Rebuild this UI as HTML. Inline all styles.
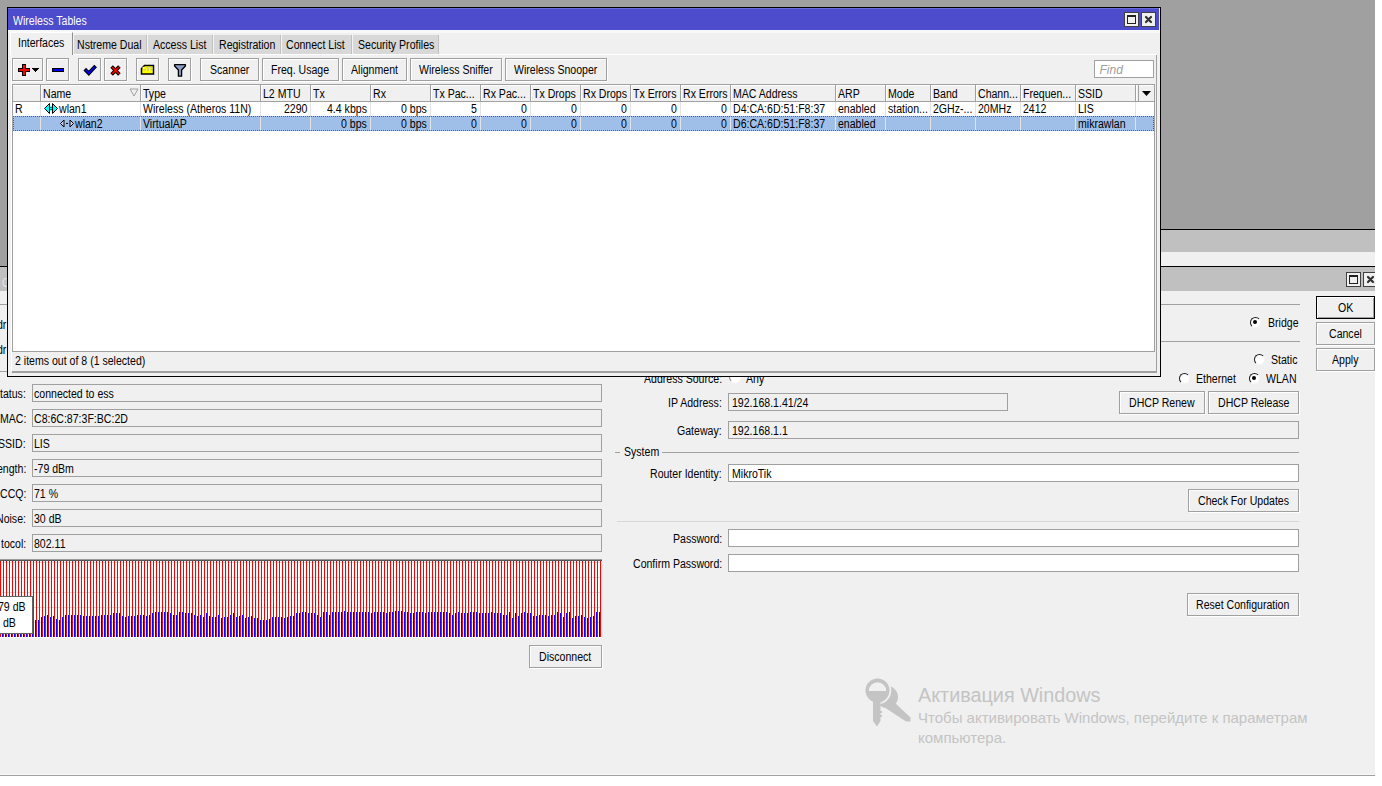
<!DOCTYPE html>
<html><head><meta charset="utf-8">
<style>
*{box-sizing:border-box;margin:0;padding:0}
html,body{width:1382px;height:786px;overflow:hidden;background:#fff;font-family:"Liberation Sans",sans-serif;font-size:12px;color:#000}
.a{position:absolute}
.t{position:absolute;white-space:nowrap;line-height:14px;transform-origin:0 0}
</style></head><body>
<div class="a" style="left:0;top:0;width:1375px;height:776px;overflow:hidden">
<div class="a" style="left:0px;top:0px;width:1375px;height:266px;background:#a0a0a0"></div>
<div class="a" style="left:1000px;top:229px;width:375px;height:1px;background:#000"></div>
<div class="a" style="left:1000px;top:230px;width:375px;height:22px;background:#c0c0c0"></div>
<div class="a" style="left:1000px;top:252px;width:375px;height:14px;background:#f0f0f0"></div>
<div class="a" style="left:0px;top:266px;width:1375px;height:1px;background:#000"></div>
<div class="a" style="left:0px;top:267px;width:1375px;height:24px;background:#c0c0c0"></div>
<div class="t" style="left:2.00px;top:276.00px;transform:scaleX(0.88);color:#e4e4e4;">C</div>
<div class="a" style="left:0px;top:291px;width:1375px;height:483px;background:#f0f0f0"></div>
<div class="a" style="left:0px;top:774px;width:1375px;height:1px;background:#f8f8f8"></div>
<div class="a" style="left:0px;top:775px;width:1375px;height:1px;background:#a0a0a0"></div>
<div class="a" style="left:1346px;top:272px;width:15px;height:15px;border:1px solid #404040;background:#f0f0f0"></div>
<div class="a" style="left:1349px;top:275px;width:9px;height:9px;border:1px solid #202020;border-top-width:2px"></div>
<div class="a" style="left:1363px;top:272px;width:15px;height:15px;border:1px solid #404040;background:#f0f0f0"></div>
<svg class="a" style="left:1363px;top:272px" width="15" height="15"><path d="M5 5L10 10M10 5L5 10" stroke="#303030" stroke-width="2.2" stroke-linecap="round"/></svg>
<div class="a" style="left:0px;top:304px;width:1300px;height:1px;background:#a0a0a0"></div>
<div class="a" style="left:1160px;top:341px;width:140px;height:1px;background:#a0a0a0"></div>
<div class="a" style="left:0px;top:371px;width:8px;height:1px;background:#a0a0a0"></div>
<div class="t" style="left:-3.00px;top:318.00px;transform:scaleX(0.88);">dr</div>
<div class="t" style="left:-3.00px;top:343.00px;transform:scaleX(0.88);">dr</div>
<div class="a" style="left:1316px;top:296px;width:59px;height:23px;border:1px solid #000;box-shadow:inset 1px 1px 0 #fff,inset -1px -1px 0 #a0a0a0;background:#f0f0f0"></div>
<div class="t" style="left:1337.88px;top:301.00px;transform:scaleX(0.88);">OK</div>
<div class="a" style="left:1316px;top:322px;width:59px;height:23px;border:1px solid #a0a0a0;box-shadow:inset 1px 1px 0 #fff,1px 1px 0 #fff;background:#f0f0f0"></div>
<div class="t" style="left:1329.06px;top:327.00px;transform:scaleX(0.88);">Cancel</div>
<div class="a" style="left:1316px;top:348px;width:59px;height:23px;border:1px solid #a0a0a0;box-shadow:inset 1px 1px 0 #fff,1px 1px 0 #fff;background:#f0f0f0"></div>
<div class="t" style="left:1332.29px;top:353.00px;transform:scaleX(0.88);">Apply</div>
<div class="a" style="left:1249.5px;top:316.5px;width:11px;height:11px;border-radius:50%;background:#fff;border:1.4px solid;border-color:#1a1a1a #f4f4f4 #f4f4f4 #1a1a1a"></div>
<div class="a" style="left:1253px;top:320px;width:4px;height:4px;border-radius:50%;background:#000"></div>
<div class="t" style="left:1268.00px;top:316.00px;transform:scaleX(0.88);">Bridge</div>
<div class="a" style="left:1253.5px;top:353.5px;width:11px;height:11px;border-radius:50%;background:#fff;border:1.4px solid;border-color:#1a1a1a #f4f4f4 #f4f4f4 #1a1a1a"></div>
<div class="t" style="left:1271.00px;top:353.00px;transform:scaleX(0.88);">Static</div>
<div class="a" style="left:1178.5px;top:372.5px;width:11px;height:11px;border-radius:50%;background:#fff;border:1.4px solid;border-color:#1a1a1a #f4f4f4 #f4f4f4 #1a1a1a"></div>
<div class="t" style="left:1196.00px;top:372.00px;transform:scaleX(0.88);">Ethernet</div>
<div class="a" style="left:1248.5px;top:372.5px;width:11px;height:11px;border-radius:50%;background:#fff;border:1.4px solid;border-color:#1a1a1a #f4f4f4 #f4f4f4 #1a1a1a"></div>
<div class="a" style="left:1252px;top:376px;width:4px;height:4px;border-radius:50%;background:#000"></div>
<div class="t" style="left:1266.00px;top:372.00px;transform:scaleX(0.88);">WLAN</div>
<div class="a" style="left:32px;top:384px;width:570px;height:18px;border:1px solid #a0a0a0;background:#f0f0f0"></div>
<div class="t" style="left:0.19px;top:387.00px;transform:scaleX(0.88);">tatus:</div>
<div class="t" style="left:34.00px;top:387.00px;transform:scaleX(0.88);">connected to ess</div>
<div class="a" style="left:32px;top:409px;width:570px;height:18px;border:1px solid #a0a0a0;background:#f0f0f0"></div>
<div class="t" style="left:-0.40px;top:412.00px;transform:scaleX(0.88);">MAC:</div>
<div class="t" style="left:34.00px;top:412.00px;transform:scaleX(0.88);">C8:6C:87:3F:BC:2D</div>
<div class="a" style="left:32px;top:434px;width:570px;height:18px;border:1px solid #a0a0a0;background:#f0f0f0"></div>
<div class="t" style="left:-1.57px;top:437.00px;transform:scaleX(0.88);">SSID:</div>
<div class="t" style="left:34.00px;top:437.00px;transform:scaleX(0.88);">LIS</div>
<div class="a" style="left:32px;top:459px;width:570px;height:18px;border:1px solid #a0a0a0;background:#f0f0f0"></div>
<div class="t" style="left:-3.34px;top:462.00px;transform:scaleX(0.88);">ength:</div>
<div class="t" style="left:34.00px;top:462.00px;transform:scaleX(0.88);">-79 dBm</div>
<div class="a" style="left:32px;top:484px;width:570px;height:18px;border:1px solid #a0a0a0;background:#f0f0f0"></div>
<div class="t" style="left:-0.40px;top:487.00px;transform:scaleX(0.88);">CCQ:</div>
<div class="t" style="left:34.00px;top:487.00px;transform:scaleX(0.88);">71 %</div>
<div class="a" style="left:32px;top:509px;width:570px;height:18px;border:1px solid #a0a0a0;background:#f0f0f0"></div>
<div class="t" style="left:-3.93px;top:512.00px;transform:scaleX(0.88);">Noise:</div>
<div class="t" style="left:34.00px;top:512.00px;transform:scaleX(0.88);">30 dB</div>
<div class="a" style="left:32px;top:534px;width:570px;height:18px;border:1px solid #a0a0a0;background:#f0f0f0"></div>
<div class="t" style="left:0.77px;top:537.00px;transform:scaleX(0.88);">tocol:</div>
<div class="t" style="left:34.00px;top:537.00px;transform:scaleX(0.88);">802.11</div>
<div class="a" style="left:0px;top:559px;width:602px;height:1px;background:#9a9a9a"></div>
<div class="a" style="left:0px;top:560px;width:602px;height:1px;background:#555"></div>
<div class="a" style="left:0px;top:561px;width:602px;height:76px;background:#fff"></div>
<div class="a" style="left:0px;top:637px;width:602px;height:1px;background:#fff"></div>
<div class="a" style="left:0px;top:562px;width:602px;height:1px;background:#d4d8d8"></div>
<div class="a" style="left:0px;top:577px;width:602px;height:1px;background:#d4d8d8"></div>
<div class="a" style="left:0px;top:592px;width:602px;height:1px;background:#d4d8d8"></div>
<div class="a" style="left:0px;top:607px;width:602px;height:1px;background:#d4d8d8"></div>
<div class="a" style="left:0px;top:622px;width:602px;height:1px;background:#d4d8d8"></div>
<div class="a" style="left:1px;top:561px;width:1px;height:76px;background:#dceeee"></div>
<div class="a" style="left:16px;top:561px;width:1px;height:76px;background:#dceeee"></div>
<div class="a" style="left:31px;top:561px;width:1px;height:76px;background:#dceeee"></div>
<div class="a" style="left:46px;top:561px;width:1px;height:76px;background:#dceeee"></div>
<div class="a" style="left:61px;top:561px;width:1px;height:76px;background:#dceeee"></div>
<div class="a" style="left:76px;top:561px;width:1px;height:76px;background:#dceeee"></div>
<div class="a" style="left:91px;top:561px;width:1px;height:76px;background:#dceeee"></div>
<div class="a" style="left:106px;top:561px;width:1px;height:76px;background:#dceeee"></div>
<div class="a" style="left:121px;top:561px;width:1px;height:76px;background:#dceeee"></div>
<div class="a" style="left:136px;top:561px;width:1px;height:76px;background:#dceeee"></div>
<div class="a" style="left:151px;top:561px;width:1px;height:76px;background:#dceeee"></div>
<div class="a" style="left:166px;top:561px;width:1px;height:76px;background:#dceeee"></div>
<div class="a" style="left:181px;top:561px;width:1px;height:76px;background:#dceeee"></div>
<div class="a" style="left:196px;top:561px;width:1px;height:76px;background:#dceeee"></div>
<div class="a" style="left:211px;top:561px;width:1px;height:76px;background:#dceeee"></div>
<div class="a" style="left:226px;top:561px;width:1px;height:76px;background:#dceeee"></div>
<div class="a" style="left:241px;top:561px;width:1px;height:76px;background:#dceeee"></div>
<div class="a" style="left:256px;top:561px;width:1px;height:76px;background:#dceeee"></div>
<div class="a" style="left:271px;top:561px;width:1px;height:76px;background:#dceeee"></div>
<div class="a" style="left:286px;top:561px;width:1px;height:76px;background:#dceeee"></div>
<div class="a" style="left:301px;top:561px;width:1px;height:76px;background:#dceeee"></div>
<div class="a" style="left:316px;top:561px;width:1px;height:76px;background:#dceeee"></div>
<div class="a" style="left:331px;top:561px;width:1px;height:76px;background:#dceeee"></div>
<div class="a" style="left:346px;top:561px;width:1px;height:76px;background:#dceeee"></div>
<div class="a" style="left:361px;top:561px;width:1px;height:76px;background:#dceeee"></div>
<div class="a" style="left:376px;top:561px;width:1px;height:76px;background:#dceeee"></div>
<div class="a" style="left:391px;top:561px;width:1px;height:76px;background:#dceeee"></div>
<div class="a" style="left:406px;top:561px;width:1px;height:76px;background:#dceeee"></div>
<div class="a" style="left:421px;top:561px;width:1px;height:76px;background:#dceeee"></div>
<div class="a" style="left:436px;top:561px;width:1px;height:76px;background:#dceeee"></div>
<div class="a" style="left:451px;top:561px;width:1px;height:76px;background:#dceeee"></div>
<div class="a" style="left:466px;top:561px;width:1px;height:76px;background:#dceeee"></div>
<div class="a" style="left:481px;top:561px;width:1px;height:76px;background:#dceeee"></div>
<div class="a" style="left:496px;top:561px;width:1px;height:76px;background:#dceeee"></div>
<div class="a" style="left:511px;top:561px;width:1px;height:76px;background:#dceeee"></div>
<div class="a" style="left:526px;top:561px;width:1px;height:76px;background:#dceeee"></div>
<div class="a" style="left:541px;top:561px;width:1px;height:76px;background:#dceeee"></div>
<div class="a" style="left:556px;top:561px;width:1px;height:76px;background:#dceeee"></div>
<div class="a" style="left:571px;top:561px;width:1px;height:76px;background:#dceeee"></div>
<div class="a" style="left:586px;top:561px;width:1px;height:76px;background:#dceeee"></div>
<div class="a" style="left:601px;top:561px;width:1px;height:76px;background:#dceeee"></div>
<svg class="a" style="left:0;top:561px" width="602" height="76" shape-rendering="crispEdges"><path fill="#ff0000" d="M0 0h1v76h-1zM3 0h1v76h-1zM6 0h1v76h-1zM9 0h1v76h-1zM12 0h1v76h-1zM15 0h1v76h-1zM18 0h1v76h-1zM21 0h1v76h-1zM24 0h1v76h-1zM27 0h1v76h-1zM30 0h1v76h-1zM33 0h1v76h-1zM36 0h1v76h-1zM39 0h1v76h-1zM42 0h1v76h-1zM45 0h1v76h-1zM48 0h1v76h-1zM51 0h1v76h-1zM54 0h1v76h-1zM57 0h1v76h-1zM60 0h1v76h-1zM63 0h1v76h-1zM66 0h1v76h-1zM69 0h1v76h-1zM72 0h1v76h-1zM75 0h1v76h-1zM78 0h1v76h-1zM81 0h1v76h-1zM84 0h1v76h-1zM87 0h1v76h-1zM90 0h1v76h-1zM93 0h1v76h-1zM96 0h1v76h-1zM99 0h1v76h-1zM102 0h1v76h-1zM105 0h1v76h-1zM108 0h1v76h-1zM111 0h1v76h-1zM114 0h1v76h-1zM117 0h1v76h-1zM120 0h1v76h-1zM123 0h1v76h-1zM126 0h1v76h-1zM129 0h1v76h-1zM132 0h1v76h-1zM135 0h1v76h-1zM138 0h1v76h-1zM141 0h1v76h-1zM144 0h1v76h-1zM147 0h1v76h-1zM150 0h1v76h-1zM153 0h1v76h-1zM156 0h1v76h-1zM159 0h1v76h-1zM162 0h1v76h-1zM165 0h1v76h-1zM168 0h1v76h-1zM171 0h1v76h-1zM174 0h1v76h-1zM177 0h1v76h-1zM180 0h1v76h-1zM183 0h1v76h-1zM186 0h1v76h-1zM189 0h1v76h-1zM192 0h1v76h-1zM195 0h1v76h-1zM198 0h1v76h-1zM201 0h1v76h-1zM204 0h1v76h-1zM207 0h1v76h-1zM210 0h1v76h-1zM213 0h1v76h-1zM216 0h1v76h-1zM219 0h1v76h-1zM222 0h1v76h-1zM225 0h1v76h-1zM228 0h1v76h-1zM231 0h1v76h-1zM234 0h1v76h-1zM237 0h1v76h-1zM240 0h1v76h-1zM243 0h1v76h-1zM246 0h1v76h-1zM249 0h1v76h-1zM252 0h1v76h-1zM255 0h1v76h-1zM258 0h1v76h-1zM261 0h1v76h-1zM264 0h1v76h-1zM267 0h1v76h-1zM270 0h1v76h-1zM273 0h1v76h-1zM276 0h1v76h-1zM279 0h1v76h-1zM282 0h1v76h-1zM285 0h1v76h-1zM288 0h1v76h-1zM291 0h1v76h-1zM294 0h1v76h-1zM297 0h1v76h-1zM300 0h1v76h-1zM303 0h1v76h-1zM306 0h1v76h-1zM309 0h1v76h-1zM312 0h1v76h-1zM315 0h1v76h-1zM318 0h1v76h-1zM321 0h1v76h-1zM324 0h1v76h-1zM327 0h1v76h-1zM330 0h1v76h-1zM333 0h1v76h-1zM336 0h1v76h-1zM339 0h1v76h-1zM342 0h1v76h-1zM345 0h1v76h-1zM348 0h1v76h-1zM351 0h1v76h-1zM354 0h1v76h-1zM357 0h1v76h-1zM360 0h1v76h-1zM363 0h1v76h-1zM366 0h1v76h-1zM369 0h1v76h-1zM372 0h1v76h-1zM375 0h1v76h-1zM378 0h1v76h-1zM381 0h1v76h-1zM384 0h1v76h-1zM387 0h1v76h-1zM390 0h1v76h-1zM393 0h1v76h-1zM396 0h1v76h-1zM399 0h1v76h-1zM402 0h1v76h-1zM405 0h1v76h-1zM408 0h1v76h-1zM411 0h1v76h-1zM414 0h1v76h-1zM417 0h1v76h-1zM420 0h1v76h-1zM423 0h1v76h-1zM426 0h1v76h-1zM429 0h1v76h-1zM432 0h1v76h-1zM435 0h1v76h-1zM438 0h1v76h-1zM441 0h1v76h-1zM444 0h1v76h-1zM447 0h1v76h-1zM450 0h1v76h-1zM453 0h1v76h-1zM456 0h1v76h-1zM459 0h1v76h-1zM462 0h1v76h-1zM465 0h1v76h-1zM468 0h1v76h-1zM471 0h1v76h-1zM474 0h1v76h-1zM477 0h1v76h-1zM480 0h1v76h-1zM483 0h1v76h-1zM486 0h1v76h-1zM489 0h1v76h-1zM492 0h1v76h-1zM495 0h1v76h-1zM498 0h1v76h-1zM501 0h1v76h-1zM504 0h1v76h-1zM507 0h1v76h-1zM510 0h1v76h-1zM513 0h1v76h-1zM516 0h1v76h-1zM519 0h1v76h-1zM522 0h1v76h-1zM525 0h1v76h-1zM528 0h1v76h-1zM531 0h1v76h-1zM534 0h1v76h-1zM537 0h1v76h-1zM540 0h1v76h-1zM543 0h1v76h-1zM546 0h1v76h-1zM549 0h1v76h-1zM552 0h1v76h-1zM555 0h1v76h-1zM558 0h1v76h-1zM561 0h1v76h-1zM564 0h1v76h-1zM567 0h1v76h-1zM570 0h1v76h-1zM573 0h1v76h-1zM576 0h1v76h-1zM579 0h1v76h-1zM582 0h1v76h-1zM585 0h1v76h-1zM588 0h1v76h-1zM591 0h1v76h-1zM594 0h1v76h-1zM597 0h1v76h-1zM600 0h1v76h-1z"/><path fill="#0000ff" d="M35 59h1v17h-1zM38 59h1v17h-1zM41 56h1v20h-1zM44 55h1v21h-1zM47 54h1v22h-1zM50 56h1v20h-1zM53 55h1v21h-1zM56 58h1v18h-1zM59 59h1v17h-1zM62 56h1v20h-1zM65 54h1v22h-1zM68 54h1v22h-1zM71 54h1v22h-1zM74 54h1v22h-1zM77 54h1v22h-1zM80 54h1v22h-1zM83 55h1v21h-1zM86 55h1v21h-1zM89 55h1v21h-1zM92 55h1v21h-1zM95 55h1v21h-1zM98 55h1v21h-1zM101 54h1v22h-1zM104 54h1v22h-1zM107 54h1v22h-1zM110 54h1v22h-1zM113 52h1v24h-1zM116 52h1v24h-1zM119 52h1v24h-1zM122 55h1v21h-1zM125 56h1v20h-1zM128 55h1v21h-1zM131 55h1v21h-1zM134 55h1v21h-1zM137 54h1v22h-1zM140 54h1v22h-1zM143 54h1v22h-1zM146 55h1v21h-1zM149 54h1v22h-1zM152 52h1v24h-1zM155 51h1v25h-1zM158 51h1v25h-1zM161 51h1v25h-1zM164 51h1v25h-1zM167 51h1v25h-1zM170 52h1v24h-1zM173 54h1v22h-1zM176 54h1v22h-1zM179 51h1v25h-1zM182 51h1v25h-1zM185 52h1v24h-1zM188 52h1v24h-1zM191 52h1v24h-1zM194 54h1v22h-1zM197 55h1v21h-1zM200 54h1v22h-1zM203 56h1v20h-1zM206 52h1v24h-1zM209 55h1v21h-1zM212 56h1v20h-1zM215 56h1v20h-1zM218 54h1v22h-1zM221 57h1v19h-1zM224 56h1v20h-1zM227 56h1v20h-1zM230 54h1v22h-1zM233 52h1v24h-1zM236 56h1v20h-1zM239 55h1v21h-1zM242 54h1v22h-1zM245 57h1v19h-1zM248 56h1v20h-1zM251 55h1v21h-1zM254 57h1v19h-1zM257 57h1v19h-1zM260 59h1v17h-1zM263 59h1v17h-1zM266 59h1v17h-1zM269 58h1v18h-1zM272 56h1v20h-1zM275 56h1v20h-1zM278 56h1v20h-1zM281 56h1v20h-1zM284 57h1v19h-1zM287 56h1v20h-1zM290 55h1v21h-1zM293 55h1v21h-1zM296 52h1v24h-1zM299 52h1v24h-1zM302 51h1v25h-1zM305 51h1v25h-1zM308 52h1v24h-1zM311 52h1v24h-1zM314 52h1v24h-1zM317 54h1v22h-1zM320 56h1v20h-1zM323 51h1v25h-1zM326 51h1v25h-1zM329 54h1v22h-1zM332 51h1v25h-1zM335 51h1v25h-1zM338 51h1v25h-1zM341 51h1v25h-1zM344 50h1v26h-1zM347 51h1v25h-1zM350 51h1v25h-1zM353 51h1v25h-1zM356 51h1v25h-1zM359 51h1v25h-1zM362 51h1v25h-1zM365 51h1v25h-1zM368 51h1v25h-1zM371 52h1v24h-1zM374 51h1v25h-1zM377 51h1v25h-1zM380 51h1v25h-1zM383 51h1v25h-1zM386 52h1v24h-1zM389 51h1v25h-1zM392 51h1v25h-1zM395 50h1v26h-1zM398 50h1v26h-1zM401 50h1v26h-1zM404 51h1v25h-1zM407 51h1v25h-1zM410 52h1v24h-1zM413 52h1v24h-1zM416 51h1v25h-1zM419 51h1v25h-1zM422 51h1v25h-1zM425 52h1v24h-1zM428 51h1v25h-1zM431 51h1v25h-1zM434 51h1v25h-1zM437 51h1v25h-1zM440 51h1v25h-1zM443 51h1v25h-1zM446 51h1v25h-1zM449 52h1v24h-1zM452 54h1v22h-1zM455 52h1v24h-1zM458 51h1v25h-1zM461 52h1v24h-1zM464 52h1v24h-1zM467 52h1v24h-1zM470 51h1v25h-1zM473 51h1v25h-1zM476 51h1v25h-1zM479 52h1v24h-1zM482 52h1v24h-1zM485 52h1v24h-1zM488 52h1v24h-1zM491 51h1v25h-1zM494 52h1v24h-1zM497 52h1v24h-1zM500 52h1v24h-1zM503 54h1v22h-1zM506 54h1v22h-1zM509 51h1v25h-1zM512 57h1v19h-1zM515 52h1v24h-1zM518 55h1v21h-1zM521 52h1v24h-1zM524 51h1v25h-1zM527 52h1v24h-1zM530 52h1v24h-1zM533 55h1v21h-1zM536 55h1v21h-1zM539 54h1v22h-1zM542 54h1v22h-1zM545 54h1v22h-1zM548 55h1v21h-1zM551 54h1v22h-1zM554 54h1v22h-1zM557 51h1v25h-1zM560 52h1v24h-1zM563 56h1v20h-1zM566 52h1v24h-1zM569 51h1v25h-1zM572 57h1v19h-1zM575 55h1v21h-1zM578 55h1v21h-1zM581 54h1v22h-1zM584 56h1v20h-1zM587 57h1v19h-1zM590 56h1v20h-1zM593 55h1v21h-1zM596 51h1v25h-1zM599 51h1v25h-1zM2 60h1v16h-1zM5 60h1v16h-1zM8 60h1v16h-1zM11 60h1v16h-1zM14 60h1v16h-1zM17 60h1v16h-1zM20 60h1v16h-1zM23 60h1v16h-1zM26 60h1v16h-1zM29 60h1v16h-1zM32 60h1v16h-1z"/></svg>
<div class="a" style="left:-2px;top:596px;width:35px;height:38px;border:1px solid #646464;background:#fff"></div>
<div class="t" style="left:-1.80px;top:600.00px;transform:scaleX(0.88);">79 dB</div>
<div class="t" style="left:2.50px;top:616.00px;transform:scaleX(0.88);">dB</div>
<div class="a" style="left:529px;top:645px;width:73px;height:23px;border:1px solid #a0a0a0;box-shadow:inset 1px 1px 0 #fff,1px 1px 0 #fff;background:#f0f0f0"></div>
<div class="t" style="left:539.38px;top:650.00px;transform:scaleX(0.88);">Disconnect</div>
<div class="t" style="left:643.96px;top:372.00px;transform:scaleX(0.88);">Address Source:</div>
<div class="t" style="left:745.50px;top:372.00px;transform:scaleX(0.88);">Any</div>
<div class="a" style="left:729px;top:371px;width:12px;height:12px;border-radius:50%;background:#fff;border:1px solid;border-color:#808080 #fff #fff #808080"></div>
<div class="a" style="left:728px;top:393px;width:280px;height:18px;border:1px solid #a0a0a0;background:#f0f0f0"></div>
<div class="t" style="left:668.21px;top:396.00px;transform:scaleX(0.88);">IP Address:</div>
<div class="t" style="left:732.00px;top:396.00px;transform:scaleX(0.88);">192.168.1.41/24</div>
<div class="a" style="left:1119px;top:391px;width:86px;height:23px;border:1px solid #a0a0a0;box-shadow:inset 1px 1px 0 #fff,1px 1px 0 #fff;background:#f0f0f0"></div>
<div class="t" style="left:1129.23px;top:396.00px;transform:scaleX(0.88);">DHCP Renew</div>
<div class="a" style="left:1208px;top:391px;width:91px;height:23px;border:1px solid #a0a0a0;box-shadow:inset 1px 1px 0 #fff,1px 1px 0 #fff;background:#f0f0f0"></div>
<div class="t" style="left:1217.79px;top:396.00px;transform:scaleX(0.88);">DHCP Release</div>
<div class="a" style="left:728px;top:421px;width:571px;height:18px;border:1px solid #a0a0a0;background:#f0f0f0"></div>
<div class="t" style="left:677.41px;top:424.00px;transform:scaleX(0.88);">Gateway:</div>
<div class="t" style="left:732.00px;top:424.00px;transform:scaleX(0.88);">192.168.1.1</div>
<div class="a" style="left:615px;top:452px;width:5px;height:1px;background:#a0a0a0"></div>
<div class="t" style="left:624.00px;top:445.00px;transform:scaleX(0.88);">System</div>
<div class="a" style="left:662px;top:452px;width:637px;height:1px;background:#a0a0a0"></div>
<div class="a" style="left:728px;top:464px;width:571px;height:18px;border:1px solid #a0a0a0;background:#fff"></div>
<div class="t" style="left:650.42px;top:467.00px;transform:scaleX(0.88);">Router Identity:</div>
<div class="t" style="left:732.00px;top:467.00px;transform:scaleX(0.88);">MikroTik</div>
<div class="a" style="left:1188px;top:489px;width:111px;height:23px;border:1px solid #a0a0a0;box-shadow:inset 1px 1px 0 #fff,1px 1px 0 #fff;background:#f0f0f0"></div>
<div class="t" style="left:1198.02px;top:494.00px;transform:scaleX(0.88);">Check For Updates</div>
<div class="a" style="left:617px;top:521px;width:682px;height:1px;background:#d8d8d8"></div>
<div class="a" style="left:728px;top:529px;width:571px;height:18px;border:1px solid #a0a0a0;background:#fff"></div>
<div class="t" style="left:672.71px;top:532.00px;transform:scaleX(0.88);">Password:</div>
<div class="a" style="left:728px;top:554px;width:571px;height:18px;border:1px solid #a0a0a0;background:#fff"></div>
<div class="t" style="left:632.80px;top:557.00px;transform:scaleX(0.88);">Confirm Password:</div>
<div class="a" style="left:1187px;top:593px;width:112px;height:23px;border:1px solid #a0a0a0;box-shadow:inset 1px 1px 0 #fff,1px 1px 0 #fff;background:#f0f0f0"></div>
<div class="t" style="left:1196.34px;top:598.00px;transform:scaleX(0.88);">Reset Configuration</div>
<div class="t" style="left:918.00px;top:687.67px;font-size:20px;transform:scaleX(0.99);color:#c4c4c4;">Активация Windows</div>
<div class="t" style="left:918.00px;top:711.25px;font-size:15px;color:#c4c4c4;">Чтобы активировать Windows, перейдите к параметрам</div>
<div class="t" style="left:918.00px;top:731.25px;font-size:15px;color:#c4c4c4;">компьютера.</div>
<svg class="a" style="left:860px;top:670px" width="60" height="62" viewBox="0 0 60 62">
<g fill="#c4c4c4">
<circle cx="27" cy="27" r="11"/>
<path d="M24 37 L34.5 32.5 L50.5 47.5 L50.5 51.5 L46 51.5 Z"/>
</g>
<circle cx="17.5" cy="20.5" r="13.8" fill="#f0f0f0"/>
<g fill="#c4c4c4">
<circle cx="17.5" cy="20.5" r="12"/>
<path d="M13 28 H20.5 V41 H22 V43 H20.5 V45 H22 V47 H20.5 V51 L17 56.5 L13 51 Z"/>
</g>
<path d="M8.8 21 A8.7 8.7 0 0 1 26.2 21 Z" fill="#f0f0f0"/>
</svg>
<div class="a" style="left:7px;top:7px;width:1154px;height:370px;background:#000"></div>
<div class="a" style="left:8px;top:8px;width:1152px;height:368px;background:#f0f0f0"></div>
<div class="a" style="left:8px;top:8px;width:1151px;height:22px;background:#4c4ccc"></div>
<div class="t" style="left:13.00px;top:14.00px;transform:scaleX(0.88);color:#fff;">Wireless Tables</div>
<div class="a" style="left:1124px;top:12px;width:15px;height:15px;border:1px solid #404040;background:#f0f0f0"></div>
<div class="a" style="left:1127px;top:15px;width:9px;height:9px;border:1px solid #202020;border-top-width:2px"></div>
<div class="a" style="left:1141px;top:12px;width:15px;height:15px;border:1px solid #404040;background:#f0f0f0"></div>
<svg class="a" style="left:1141px;top:12px" width="15" height="15"><path d="M5 5L10 10M10 5L5 10" stroke="#303030" stroke-width="2.2" stroke-linecap="round"/></svg>
<div class="a" style="left:8px;top:8px;width:1151px;height:1px;background:#6a6ad8"></div>
<div class="a" style="left:8px;top:30px;width:1152px;height:3px;background:#f8f8f8"></div>
<div class="a" style="left:11px;top:54px;width:1146px;height:319px;border:1px solid;border-color:#fff #a0a0a0 #a0a0a0 #fff"></div>
<div class="a" style="left:73px;top:35px;width:74px;height:19px;background:#d8d8d8;border-left:1px solid #f4f4f4;border-right:1px solid #c0c0c0"></div>
<div class="t" style="left:77.00px;top:38.00px;transform:scaleX(0.88);">Nstreme Dual</div>
<div class="a" style="left:147px;top:35px;width:66px;height:19px;background:#d8d8d8;border-left:1px solid #f4f4f4;border-right:1px solid #c0c0c0"></div>
<div class="t" style="left:152.50px;top:38.00px;transform:scaleX(0.88);">Access List</div>
<div class="a" style="left:213px;top:35px;width:68px;height:19px;background:#d8d8d8;border-left:1px solid #f4f4f4;border-right:1px solid #c0c0c0"></div>
<div class="t" style="left:218.70px;top:38.00px;transform:scaleX(0.88);">Registration</div>
<div class="a" style="left:281px;top:35px;width:71px;height:19px;background:#d8d8d8;border-left:1px solid #f4f4f4;border-right:1px solid #c0c0c0"></div>
<div class="t" style="left:285.60px;top:38.00px;transform:scaleX(0.88);">Connect List</div>
<div class="a" style="left:352px;top:35px;width:87px;height:19px;background:#d8d8d8;border-left:1px solid #f4f4f4;border-right:1px solid #c0c0c0"></div>
<div class="t" style="left:357.70px;top:38.00px;transform:scaleX(0.88);">Security Profiles</div>
<div class="a" style="left:73px;top:54px;width:1084px;height:1px;background:#fff"></div>
<div class="a" style="left:10px;top:32px;width:63px;height:23px;background:#f0f0f0;border-left:1px solid #fff;border-top:1px solid #fff;border-right:1px solid #909090"></div>
<div class="t" style="left:18.00px;top:36.00px;transform:scaleX(0.88);">Interfaces</div>
<div class="a" style="left:12px;top:58px;width:31px;height:23px;border:1px solid #a0a0a0;box-shadow:inset 1px 1px 0 #fff,1px 1px 0 #fff;background:#f0f0f0"></div>
<div class="a" style="left:46px;top:58px;width:23px;height:23px;border:1px solid #a0a0a0;box-shadow:inset 1px 1px 0 #fff,1px 1px 0 #fff;background:#f0f0f0"></div>
<div class="a" style="left:78px;top:58px;width:23px;height:23px;border:1px solid #a0a0a0;box-shadow:inset 1px 1px 0 #fff,1px 1px 0 #fff;background:#f0f0f0"></div>
<div class="a" style="left:104px;top:58px;width:23px;height:23px;border:1px solid #a0a0a0;box-shadow:inset 1px 1px 0 #fff,1px 1px 0 #fff;background:#f0f0f0"></div>
<div class="a" style="left:136px;top:58px;width:23px;height:23px;border:1px solid #a0a0a0;box-shadow:inset 1px 1px 0 #fff,1px 1px 0 #fff;background:#f0f0f0"></div>
<div class="a" style="left:168px;top:58px;width:23px;height:23px;border:1px solid #a0a0a0;box-shadow:inset 1px 1px 0 #fff,1px 1px 0 #fff;background:#f0f0f0"></div>
<div class="a" style="left:200px;top:58px;width:59px;height:23px;border:1px solid #a0a0a0;box-shadow:inset 1px 1px 0 #fff,1px 1px 0 #fff;background:#f0f0f0"></div>
<div class="t" style="left:209.84px;top:63.00px;transform:scaleX(0.88);">Scanner</div>
<div class="a" style="left:262px;top:58px;width:77px;height:23px;border:1px solid #a0a0a0;box-shadow:inset 1px 1px 0 #fff,1px 1px 0 #fff;background:#f0f0f0"></div>
<div class="t" style="left:271.45px;top:63.00px;transform:scaleX(0.88);">Freq. Usage</div>
<div class="a" style="left:342px;top:58px;width:65px;height:23px;border:1px solid #a0a0a0;box-shadow:inset 1px 1px 0 #fff,1px 1px 0 #fff;background:#f0f0f0"></div>
<div class="t" style="left:351.02px;top:63.00px;transform:scaleX(0.88);">Alignment</div>
<div class="a" style="left:410px;top:58px;width:92px;height:23px;border:1px solid #a0a0a0;box-shadow:inset 1px 1px 0 #fff,1px 1px 0 #fff;background:#f0f0f0"></div>
<div class="t" style="left:419.13px;top:63.00px;transform:scaleX(0.88);">Wireless Sniffer</div>
<div class="a" style="left:505px;top:58px;width:102px;height:23px;border:1px solid #a0a0a0;box-shadow:inset 1px 1px 0 #fff,1px 1px 0 #fff;background:#f0f0f0"></div>
<div class="t" style="left:514.33px;top:63.00px;transform:scaleX(0.88);">Wireless Snooper</div>
<svg class="a" style="left:12px;top:58px" width="190" height="23" shape-rendering="crispEdges">
<path d="M10 6h4v4h4v4h-4v4h-4v-4h-4v-4h4z" fill="#000"/><path d="M11 7h2v4h4v2h-4v4h-2v-4h-4v-2h4z" fill="#ff0000"/>
<path d="M20 10h7v1h-1v1h-1v1h-1v1h-1v-1h-1v-1h-1v-1h-1z" fill="#000"/>
<rect x="40" y="10" width="12" height="4" fill="#000"/><rect x="41" y="11" width="10" height="2" fill="#0000ff"/>
</svg>
<svg class="a" style="left:12px;top:58px" width="190" height="23">
<path d="M74.1 12.5 L76.8 15.2 L82.3 9.4" stroke="#000" stroke-width="3.8" fill="none" stroke-linecap="square" stroke-linejoin="miter"/>
<path d="M74.1 12.5 L76.8 15.2 L82.3 9.4" stroke="#0000ff" stroke-width="1.7" fill="none" stroke-linecap="square" stroke-linejoin="miter"/>
<path d="M99.6 8.6 L107.4 16.4 M107.4 8.6 L99.6 16.4" stroke="#000" stroke-width="3.6"/>
<path d="M100.2 9.2 L106.8 15.8 M106.8 9.2 L100.2 15.8" stroke="#ff0000" stroke-width="1.6"/>
<path d="M132.5 7.5 H141.5 V16 H129.5 V10.5 Z" fill="#ffff00" stroke="#000" stroke-width="1.5"/>
<path d="M134.5 9.8h2.5M138 9.8h2M131.5 11.8h2.5M135 11.8h2M138.5 11.8h2" stroke="#b0b0c8" stroke-width="1"/>
<circle cx="131.3" cy="9.6" r="0.9" fill="#fff"/>
<path d="M162.6 6.6 H173.4 V8 L169.6 12 V18.2 H166.4 V12 L162.6 8 Z" fill="#8c9cc8" stroke="#000" stroke-width="1.3" stroke-linejoin="round"/>
</svg>
<div class="a" style="left:1094px;top:60px;width:60px;height:18px;border:1px solid #a0a0a0;background:#fff"></div>
<div class="t" style="left:1099.50px;top:63.00px;color:#a0a0a0;font-style:italic">Find</div>
<div class="a" style="left:12px;top:84px;width:1143px;height:268px;border:1px solid #a0a0a0;background:#fff"></div>
<div class="a" style="left:13px;top:85px;width:1141px;height:16px;background:#f0f0f0;border-top:1px solid #fff"></div>
<div class="a" style="left:13px;top:101px;width:1141px;height:1px;background:#a0a0a0"></div>
<div class="a" style="left:40px;top:85px;width:1px;height:16px;background:#a0a0a0"></div>
<div class="a" style="left:41px;top:86px;width:1px;height:15px;background:#fff"></div>
<div class="a" style="left:40px;top:102px;width:1px;height:29px;background:#e4e4e4"></div>
<div class="a" style="left:140px;top:85px;width:1px;height:16px;background:#a0a0a0"></div>
<div class="a" style="left:141px;top:86px;width:1px;height:15px;background:#fff"></div>
<div class="a" style="left:140px;top:102px;width:1px;height:29px;background:#e4e4e4"></div>
<div class="a" style="left:260px;top:85px;width:1px;height:16px;background:#a0a0a0"></div>
<div class="a" style="left:261px;top:86px;width:1px;height:15px;background:#fff"></div>
<div class="a" style="left:260px;top:102px;width:1px;height:29px;background:#e4e4e4"></div>
<div class="a" style="left:310px;top:85px;width:1px;height:16px;background:#a0a0a0"></div>
<div class="a" style="left:311px;top:86px;width:1px;height:15px;background:#fff"></div>
<div class="a" style="left:310px;top:102px;width:1px;height:29px;background:#e4e4e4"></div>
<div class="a" style="left:370px;top:85px;width:1px;height:16px;background:#a0a0a0"></div>
<div class="a" style="left:371px;top:86px;width:1px;height:15px;background:#fff"></div>
<div class="a" style="left:370px;top:102px;width:1px;height:29px;background:#e4e4e4"></div>
<div class="a" style="left:430px;top:85px;width:1px;height:16px;background:#a0a0a0"></div>
<div class="a" style="left:431px;top:86px;width:1px;height:15px;background:#fff"></div>
<div class="a" style="left:430px;top:102px;width:1px;height:29px;background:#e4e4e4"></div>
<div class="a" style="left:480px;top:85px;width:1px;height:16px;background:#a0a0a0"></div>
<div class="a" style="left:481px;top:86px;width:1px;height:15px;background:#fff"></div>
<div class="a" style="left:480px;top:102px;width:1px;height:29px;background:#e4e4e4"></div>
<div class="a" style="left:530px;top:85px;width:1px;height:16px;background:#a0a0a0"></div>
<div class="a" style="left:531px;top:86px;width:1px;height:15px;background:#fff"></div>
<div class="a" style="left:530px;top:102px;width:1px;height:29px;background:#e4e4e4"></div>
<div class="a" style="left:580px;top:85px;width:1px;height:16px;background:#a0a0a0"></div>
<div class="a" style="left:581px;top:86px;width:1px;height:15px;background:#fff"></div>
<div class="a" style="left:580px;top:102px;width:1px;height:29px;background:#e4e4e4"></div>
<div class="a" style="left:630px;top:85px;width:1px;height:16px;background:#a0a0a0"></div>
<div class="a" style="left:631px;top:86px;width:1px;height:15px;background:#fff"></div>
<div class="a" style="left:630px;top:102px;width:1px;height:29px;background:#e4e4e4"></div>
<div class="a" style="left:680px;top:85px;width:1px;height:16px;background:#a0a0a0"></div>
<div class="a" style="left:681px;top:86px;width:1px;height:15px;background:#fff"></div>
<div class="a" style="left:680px;top:102px;width:1px;height:29px;background:#e4e4e4"></div>
<div class="a" style="left:730px;top:85px;width:1px;height:16px;background:#a0a0a0"></div>
<div class="a" style="left:731px;top:86px;width:1px;height:15px;background:#fff"></div>
<div class="a" style="left:730px;top:102px;width:1px;height:29px;background:#e4e4e4"></div>
<div class="a" style="left:835px;top:85px;width:1px;height:16px;background:#a0a0a0"></div>
<div class="a" style="left:836px;top:86px;width:1px;height:15px;background:#fff"></div>
<div class="a" style="left:835px;top:102px;width:1px;height:29px;background:#e4e4e4"></div>
<div class="a" style="left:885px;top:85px;width:1px;height:16px;background:#a0a0a0"></div>
<div class="a" style="left:886px;top:86px;width:1px;height:15px;background:#fff"></div>
<div class="a" style="left:885px;top:102px;width:1px;height:29px;background:#e4e4e4"></div>
<div class="a" style="left:930px;top:85px;width:1px;height:16px;background:#a0a0a0"></div>
<div class="a" style="left:931px;top:86px;width:1px;height:15px;background:#fff"></div>
<div class="a" style="left:930px;top:102px;width:1px;height:29px;background:#e4e4e4"></div>
<div class="a" style="left:975px;top:85px;width:1px;height:16px;background:#a0a0a0"></div>
<div class="a" style="left:976px;top:86px;width:1px;height:15px;background:#fff"></div>
<div class="a" style="left:975px;top:102px;width:1px;height:29px;background:#e4e4e4"></div>
<div class="a" style="left:1020px;top:85px;width:1px;height:16px;background:#a0a0a0"></div>
<div class="a" style="left:1021px;top:86px;width:1px;height:15px;background:#fff"></div>
<div class="a" style="left:1020px;top:102px;width:1px;height:29px;background:#e4e4e4"></div>
<div class="a" style="left:1075px;top:85px;width:1px;height:16px;background:#a0a0a0"></div>
<div class="a" style="left:1076px;top:86px;width:1px;height:15px;background:#fff"></div>
<div class="a" style="left:1075px;top:102px;width:1px;height:29px;background:#e4e4e4"></div>
<div class="a" style="left:1135px;top:85px;width:1px;height:16px;background:#a0a0a0"></div>
<div class="a" style="left:1136px;top:86px;width:1px;height:15px;background:#fff"></div>
<div class="a" style="left:1135px;top:102px;width:1px;height:29px;background:#e4e4e4"></div>
<div class="a" style="left:13px;top:116px;width:1141px;height:15px;background:#9fbfe8"></div>
<div class="a" style="left:13px;top:116px;width:1141px;height:15px;border:1px dotted #606060"></div>
<div class="a" style="left:40px;top:117px;width:1px;height:13px;background:#e4e4e4"></div>
<div class="a" style="left:140px;top:117px;width:1px;height:13px;background:#e4e4e4"></div>
<div class="a" style="left:260px;top:117px;width:1px;height:13px;background:#e4e4e4"></div>
<div class="a" style="left:310px;top:117px;width:1px;height:13px;background:#e4e4e4"></div>
<div class="a" style="left:370px;top:117px;width:1px;height:13px;background:#e4e4e4"></div>
<div class="a" style="left:430px;top:117px;width:1px;height:13px;background:#e4e4e4"></div>
<div class="a" style="left:480px;top:117px;width:1px;height:13px;background:#e4e4e4"></div>
<div class="a" style="left:530px;top:117px;width:1px;height:13px;background:#e4e4e4"></div>
<div class="a" style="left:580px;top:117px;width:1px;height:13px;background:#e4e4e4"></div>
<div class="a" style="left:630px;top:117px;width:1px;height:13px;background:#e4e4e4"></div>
<div class="a" style="left:680px;top:117px;width:1px;height:13px;background:#e4e4e4"></div>
<div class="a" style="left:730px;top:117px;width:1px;height:13px;background:#e4e4e4"></div>
<div class="a" style="left:835px;top:117px;width:1px;height:13px;background:#e4e4e4"></div>
<div class="a" style="left:885px;top:117px;width:1px;height:13px;background:#e4e4e4"></div>
<div class="a" style="left:930px;top:117px;width:1px;height:13px;background:#e4e4e4"></div>
<div class="a" style="left:975px;top:117px;width:1px;height:13px;background:#e4e4e4"></div>
<div class="a" style="left:1020px;top:117px;width:1px;height:13px;background:#e4e4e4"></div>
<div class="a" style="left:1075px;top:117px;width:1px;height:13px;background:#e4e4e4"></div>
<div class="a" style="left:1135px;top:117px;width:1px;height:13px;background:#e4e4e4"></div>
<div class="t" style="left:43.00px;top:87.00px;transform:scaleX(0.88);">Name</div>
<div class="t" style="left:143.00px;top:87.00px;transform:scaleX(0.88);">Type</div>
<div class="t" style="left:263.00px;top:87.00px;transform:scaleX(0.88);">L2 MTU</div>
<div class="t" style="left:313.00px;top:87.00px;transform:scaleX(0.88);">Tx</div>
<div class="t" style="left:373.00px;top:87.00px;transform:scaleX(0.88);">Rx</div>
<div class="t" style="left:433.00px;top:87.00px;transform:scaleX(0.88);">Tx Pac...</div>
<div class="t" style="left:483.00px;top:87.00px;transform:scaleX(0.88);">Rx Pac...</div>
<div class="t" style="left:533.00px;top:87.00px;transform:scaleX(0.88);">Tx Drops</div>
<div class="t" style="left:583.00px;top:87.00px;transform:scaleX(0.88);">Rx Drops</div>
<div class="t" style="left:633.00px;top:87.00px;transform:scaleX(0.88);">Tx Errors</div>
<div class="t" style="left:683.00px;top:87.00px;transform:scaleX(0.88);">Rx Errors</div>
<div class="t" style="left:733.00px;top:87.00px;transform:scaleX(0.88);">MAC Address</div>
<div class="t" style="left:838.00px;top:87.00px;transform:scaleX(0.88);">ARP</div>
<div class="t" style="left:888.00px;top:87.00px;transform:scaleX(0.88);">Mode</div>
<div class="t" style="left:933.00px;top:87.00px;transform:scaleX(0.88);">Band</div>
<div class="t" style="left:978.00px;top:87.00px;transform:scaleX(0.88);">Chann...</div>
<div class="t" style="left:1023.00px;top:87.00px;transform:scaleX(0.88);">Frequen...</div>
<div class="t" style="left:1078.00px;top:87.00px;transform:scaleX(0.88);">SSID</div>
<svg class="a" style="left:129px;top:88px" width="10" height="9"><path d="M1 1h8l-4 7z" fill="none" stroke="#a0a0a0"/></svg>
<svg class="a" style="left:1142px;top:91px" width="10" height="6"><path d="M0 0h9l-4.5 5z" fill="#000"/></svg>
<div class="a" style="left:1138px;top:85px;width:1px;height:16px;background:#a0a0a0"></div>
<div class="t" style="left:15.00px;top:102.00px;transform:scaleX(0.88);">R</div>
<div class="t" style="left:59.00px;top:102.00px;transform:scaleX(0.88);">wlan1</div>
<div class="t" style="left:143.00px;top:102.00px;transform:scaleX(0.88);">Wireless (Atheros 11N)</div>
<div class="t" style="left:283.71px;top:102.00px;transform:scaleX(0.88);">2290</div>
<div class="t" style="left:327.30px;top:102.00px;transform:scaleX(0.88);">4.4 kbps</div>
<div class="t" style="left:401.38px;top:102.00px;transform:scaleX(0.88);">0 bps</div>
<div class="t" style="left:471.33px;top:102.00px;transform:scaleX(0.88);">5</div>
<div class="t" style="left:521.33px;top:102.00px;transform:scaleX(0.88);">0</div>
<div class="t" style="left:571.33px;top:102.00px;transform:scaleX(0.88);">0</div>
<div class="t" style="left:621.33px;top:102.00px;transform:scaleX(0.88);">0</div>
<div class="t" style="left:671.33px;top:102.00px;transform:scaleX(0.88);">0</div>
<div class="t" style="left:721.33px;top:102.00px;transform:scaleX(0.88);">0</div>
<div class="t" style="left:733.00px;top:102.00px;transform:scaleX(0.88);">D4:CA:6D:51:F8:37</div>
<div class="t" style="left:838.00px;top:102.00px;transform:scaleX(0.88);">enabled</div>
<div class="t" style="left:888.00px;top:102.00px;transform:scaleX(0.88);">station...</div>
<div class="t" style="left:933.00px;top:102.00px;transform:scaleX(0.88);">2GHz-...</div>
<div class="t" style="left:978.00px;top:102.00px;transform:scaleX(0.88);">20MHz</div>
<div class="t" style="left:1023.00px;top:102.00px;transform:scaleX(0.88);">2412</div>
<div class="t" style="left:1078.00px;top:102.00px;transform:scaleX(0.88);">LIS</div>
<div class="t" style="left:75.00px;top:117.00px;transform:scaleX(0.88);">wlan2</div>
<div class="t" style="left:143.00px;top:117.00px;transform:scaleX(0.88);">VirtualAP</div>
<div class="t" style="left:341.38px;top:117.00px;transform:scaleX(0.88);">0 bps</div>
<div class="t" style="left:401.38px;top:117.00px;transform:scaleX(0.88);">0 bps</div>
<div class="t" style="left:471.33px;top:117.00px;transform:scaleX(0.88);">0</div>
<div class="t" style="left:521.33px;top:117.00px;transform:scaleX(0.88);">0</div>
<div class="t" style="left:571.33px;top:117.00px;transform:scaleX(0.88);">0</div>
<div class="t" style="left:621.33px;top:117.00px;transform:scaleX(0.88);">0</div>
<div class="t" style="left:671.33px;top:117.00px;transform:scaleX(0.88);">0</div>
<div class="t" style="left:721.33px;top:117.00px;transform:scaleX(0.88);">0</div>
<div class="t" style="left:733.00px;top:117.00px;transform:scaleX(0.88);">D6:CA:6D:51:F8:37</div>
<div class="t" style="left:838.00px;top:117.00px;transform:scaleX(0.88);">enabled</div>
<div class="t" style="left:1078.00px;top:117.00px;transform:scaleX(0.88);">mikrawlan</div>
<svg class="a" style="left:43px;top:102px" width="16" height="13"><path d="M6.5 4.5h3v4h-3z" fill="#00ffff"/><path d="M1.5 6.5 L6.5 1.5 V11.5 Z M14.5 6.5 L9.5 1.5 V11.5 Z" fill="#00ffff" stroke="#000" stroke-width="1" stroke-linejoin="round"/><path d="M8 5v1M8 7v1" stroke="#000" stroke-width="1"/></svg>
<svg class="a" style="left:59px;top:117px" width="16" height="13"><path d="M1.5 6.5 L5 3 V10 Z M14.5 6.5 L11 3 V10 Z" fill="#d8d8ff" stroke="#000" stroke-width="1"/><path d="M7 6.5h2" stroke="#000" stroke-width="1"/></svg>
<div class="a" style="left:13px;top:351px;width:1141px;height:1px;background:#a0a0a0"></div>
<div class="t" style="left:15.00px;top:354.00px;transform:scaleX(0.88);">2 items out of 8 (1 selected)</div>
<div class="a" style="left:12px;top:371px;width:1145px;height:1px;background:#a0a0a0"></div>
</div>
</body></html>
